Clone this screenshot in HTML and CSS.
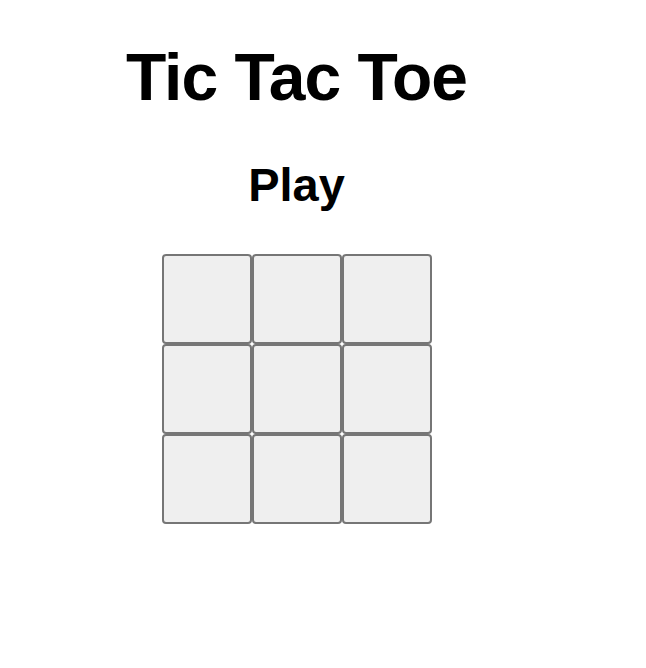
FILE: index.html
```html
<!DOCTYPE html>
<html lang="en">
<head>
  <meta charset="UTF-8">
  <title>Tic Tac Toe</title>
  <link rel="stylesheet" href="styles.css">
</head>
<body>
  <div class="game">
    <h1 class="title">Tic Tac Toe</h1>
    <h2 class="status">Play</h2>
    <div class="board">
      <button class="cell"></button>
      <button class="cell"></button>
      <button class="cell"></button>
      <button class="cell"></button>
      <button class="cell"></button>
      <button class="cell"></button>
      <button class="cell"></button>
      <button class="cell"></button>
      <button class="cell"></button>
    </div>
  </div>
</body>
</html>
```

FILE: styles.css
```css
body {
  margin: 8px;
  font-family: "Liberation Sans", Arial, sans-serif;
  background: #fff;
  color: #000;
}

.game {
  width: 577px;
  text-align: center;
}

.title {
  font-size: 66px;
  letter-spacing: -1px;
  margin: 32px 0 0;
  line-height: 1.15;
}

.status {
  font-size: 47px;
  margin: 42px 0 0;
  line-height: 1.15;
}

.board {
  display: grid;
  grid-template-columns: repeat(3, 90px);
  grid-template-rows: repeat(3, 90px);
  justify-content: center;
  margin-top: 42px;
}

.cell {
  width: 90px;
  height: 90px;
  margin: 0;
  padding: 0;
  background: #efefef;
  border: 2px solid #767676;
  border-radius: 4px;
}
```
